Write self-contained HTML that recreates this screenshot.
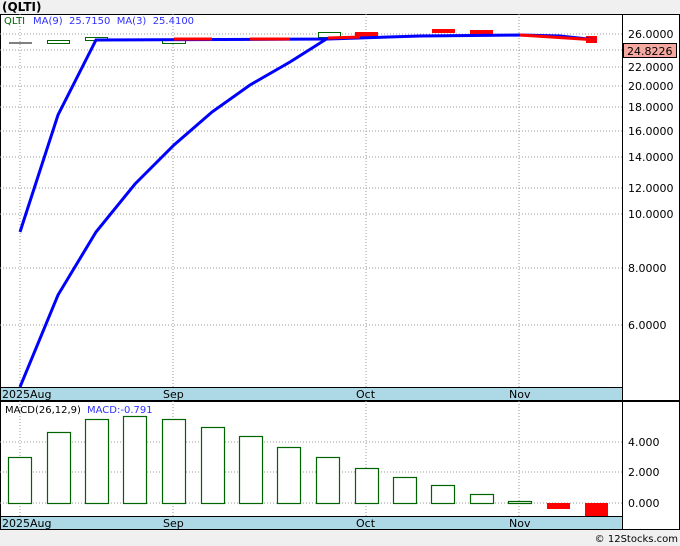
<!DOCTYPE html>
<html><head><style>
body{margin:0;width:680px;height:546px;background:#f0f0f0;overflow:hidden;font-family:"DejaVu Sans",sans-serif}
svg{position:absolute;left:0;top:0}
</style></head><body>
<svg width="680" height="546" xmlns="http://www.w3.org/2000/svg" font-family="DejaVu Sans, Liberation Sans, sans-serif">
<text x="2" y="11" font-size="12" font-weight="bold" fill="#000">(QLTI)</text>
<rect x="0.5" y="14.5" width="679" height="386" fill="#fff" stroke="#000"/>
<rect x="1" y="387" width="621" height="13" fill="#add8e6"/>
<line x1="0" y1="387.5" x2="622" y2="387.5" stroke="#000"/>
<line x1="622.5" y1="14" x2="622.5" y2="400" stroke="#000"/>
<g stroke="#999" stroke-dasharray="1,2">
<line x1="0" y1="34" x2="622" y2="34"/><line x1="0" y1="50" x2="622" y2="50"/><line x1="0" y1="67" x2="622" y2="67"/><line x1="0" y1="86" x2="622" y2="86"/><line x1="0" y1="107" x2="622" y2="107"/><line x1="0" y1="131" x2="622" y2="131"/><line x1="0" y1="157" x2="622" y2="157"/><line x1="0" y1="188" x2="622" y2="188"/><line x1="0" y1="214" x2="622" y2="214"/><line x1="0" y1="268" x2="622" y2="268"/><line x1="0" y1="325" x2="622" y2="325"/>
<line x1="20" y1="14" x2="20" y2="387"/><line x1="173" y1="14" x2="173" y2="387"/><line x1="366" y1="14" x2="366" y2="387"/><line x1="519" y1="14" x2="519" y2="387"/>
</g>
<g font-size="11" fill="#000">
<text x="628" y="38">26.0000</text><text x="628" y="71">22.0000</text><text x="628" y="90">20.0000</text><text x="628" y="111">18.0000</text><text x="628" y="135">16.0000</text><text x="628" y="161">14.0000</text><text x="628" y="192">12.0000</text><text x="628" y="218">10.0000</text><text x="628" y="272">8.0000</text><text x="628" y="329">6.0000</text>
</g>
<rect x="623.5" y="43.5" width="53" height="14" fill="#f4a8a0" stroke="#000"/>
<text x="627" y="55" font-size="11">24.8226</text>
<text x="4" y="24" font-size="10" fill="#006400">QLTI</text>
<text x="33" y="24" font-size="10" fill="#3030ff" xml:space="preserve">MA(9)  25.7150  MA(3)  25.4100</text>
<line x1="9" y1="43" x2="32" y2="43" stroke="#000"/>
<rect x="47.5" y="40.5" width="22" height="3" fill="#fff" stroke="#006400"/>
<rect x="85.5" y="37.5" width="22" height="3" fill="#fff" stroke="#006400"/>
<rect x="162.5" y="40.5" width="23" height="3" fill="#fff" stroke="#006400"/>
<rect x="318.5" y="32.5" width="22" height="5" fill="#fff" stroke="#006400"/>
<rect x="355" y="32" width="23" height="5" fill="#f00"/>
<rect x="432" y="29" width="23" height="4" fill="#f00"/>
<rect x="470" y="30" width="23" height="4" fill="#f00"/>
<rect x="586" y="36" width="11" height="7" fill="#f00"/>
<polyline points="20,387 58,295 96,232 135,184 174,145 212,112 250,85 290,62 328,38" fill="none" stroke="#00f" stroke-width="3"/>
<polyline points="20,232 58,115 96,40 328,39 420,36 520,35 560,36 597,40" fill="none" stroke="#00f" stroke-width="3"/>
<g stroke="#f00" stroke-width="3">
<line x1="174" y1="39" x2="212" y2="39"/><line x1="250" y1="39" x2="290" y2="39"/><line x1="328" y1="38" x2="360" y2="37"/><line x1="520" y1="35" x2="597" y2="40"/>
</g>
<g font-size="11" fill="#000"><text x="2" y="398">2025Aug</text><text x="163" y="398">Sep</text><text x="356" y="398">Oct</text><text x="509" y="398">Nov</text></g>
<rect x="0.5" y="401.5" width="679" height="128" fill="#fff" stroke="#000"/>
<rect x="1" y="516" width="621" height="13" fill="#add8e6"/>
<line x1="0" y1="516.5" x2="622" y2="516.5" stroke="#000"/>
<line x1="622.5" y1="401" x2="622.5" y2="530" stroke="#000"/>
<g stroke="#999" stroke-dasharray="1,2">
<line x1="0" y1="442" x2="622" y2="442"/><line x1="0" y1="472" x2="622" y2="472"/><line x1="0" y1="503" x2="622" y2="503"/>
<line x1="20" y1="401" x2="20" y2="516"/><line x1="173" y1="401" x2="173" y2="516"/><line x1="366" y1="401" x2="366" y2="516"/><line x1="519" y1="401" x2="519" y2="516"/>
</g>
<g font-size="11"><text x="628" y="446">4.000</text><text x="628" y="476">2.000</text><text x="628" y="507">0.000</text></g>
<text x="5" y="413" font-size="10" fill="#000">MACD(26,12,9)</text>
<text x="87" y="413" font-size="10" fill="#3030ff">MACD:-0.791</text>
<g fill="#fff" stroke="#006400" stroke-width="1.2">
<rect x="8.5" y="457.5" width="23" height="46"/><rect x="47.5" y="432.5" width="23" height="71"/><rect x="85.5" y="419.5" width="23" height="84"/><rect x="123.5" y="416.5" width="23" height="87"/><rect x="162.5" y="419.5" width="23" height="84"/><rect x="201.5" y="427.5" width="23" height="76"/><rect x="239.5" y="436.5" width="23" height="67"/><rect x="277.5" y="447.5" width="23" height="56"/><rect x="316.5" y="457.5" width="23" height="46"/><rect x="355.5" y="468.5" width="23" height="35"/><rect x="393.5" y="477.5" width="23" height="26"/><rect x="431.5" y="485.5" width="23" height="18"/><rect x="470.5" y="494.5" width="23" height="9"/><rect x="508.5" y="501.5" width="23" height="2"/>
</g>
<rect x="547" y="503" width="23" height="6" fill="#f00"/>
<rect x="585" y="503" width="23" height="13" fill="#f00"/>
<g font-size="11" fill="#000"><text x="2" y="527">2025Aug</text><text x="163" y="527">Sep</text><text x="356" y="527">Oct</text><text x="509" y="527">Nov</text></g>
<text x="678" y="542" font-size="10" text-anchor="end" fill="#000">© 12Stocks.com</text>
</svg>
</body></html>
